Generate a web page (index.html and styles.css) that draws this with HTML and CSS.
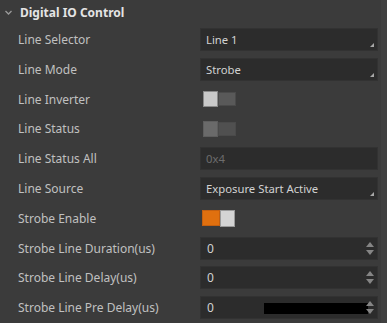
FILE: index.html
```html
<!DOCTYPE html>
<html>
<head>
<meta charset="utf-8">
<link rel="stylesheet" href="styles.css">
</head>
<body>
<div class="panel">
  <div class="header">
    <svg class="chev" width="7" height="5" viewBox="0 0 7 5"><path d="M0.5 1 L3.5 4 L6.5 1" fill="none" stroke="#9a9a9a" stroke-width="1.3"/></svg>
    <span>Digital IO Control</span>
  </div>
  <div class="row"><div class="label">Line Selector</div><div class="value"><div class="box select">Line 1<i class="corner"></i></div></div></div>
  <div class="row"><div class="label">Line Mode</div><div class="value"><div class="box select">Strobe<i class="corner"></i></div></div></div>
  <div class="row"><div class="label">Line Inverter</div><div class="value"><div class="switch off"><span class="knob"></span><span class="track"></span></div></div></div>
  <div class="row"><div class="label">Line Status</div><div class="value"><div class="switch disabled"><span class="knob"></span><span class="track"></span></div></div></div>
  <div class="row"><div class="label">Line Status All</div><div class="value"><div class="box dis">0x4</div></div></div>
  <div class="row"><div class="label">Line Source</div><div class="value"><div class="box select">Exposure Start Active<i class="corner"></i></div></div></div>
  <div class="row"><div class="label">Strobe Enable</div><div class="value"><div class="switch on"><span class="track"></span><span class="knob"></span></div></div></div>
  <div class="row"><div class="label">Strobe Line Duration(us)</div><div class="value"><div class="box num">0<i class="spin"><b class="up"></b><b class="dn"></b></i></div></div></div>
  <div class="row"><div class="label">Strobe Line Delay(us)</div><div class="value"><div class="box num">0<i class="spin"><b class="up"></b><b class="dn"></b></i></div></div></div>
  <div class="row"><div class="label">Strobe Line Pre Delay(us)</div><div class="value"><div class="box num">0<i class="redact"></i><i class="spin"><b class="up"></b><b class="dn"></b></i></div></div></div>
</div>
<div class="edge"></div>
</body>
</html>
```
FILE: styles.css
```css
html, body {
  margin: 0;
  padding: 0;
  background: #3b3b3b;
  height: 323px;
  overflow: hidden;
}
body {
  display: flex;
  font-family: "Noto Sans", "Open Sans", sans-serif;
}
.panel {
  width: 381px;
}
.edge {
  width: 6px;
  background: #404040;
}
.header {
  height: 24.6px;
  display: flex;
  align-items: center;
  padding-left: 5px;
  color: #e4e4e4;
  font-weight: bold;
  font-size: 12px;
}
.chev {
  margin-right: 8px;
  margin-top: 1px;
}
.row {
  height: 29.8px;
  display: grid;
  grid-template-columns: 200px 179px;
  align-items: center;
}
.label {
  padding-left: 18px;
  color: #c0c0c0;
  font-size: 12px;
  white-space: nowrap;
}
.value {
  display: flex;
  align-items: center;
}
.box {
  position: relative;
  box-sizing: border-box;
  width: 178px;
  height: 23px;
  background: #2c2c2c;
  border: 1px solid #323232;
  color: #d2d2d2;
  font-size: 11.3px;
  padding-left: 5px;
  display: flex;
  align-items: center;
}
.box.dis {
  color: #6c6c6c;
}
.box.num {
  padding-left: 6px;
  font-size: 12px;
}
.corner {
  position: absolute;
  right: 3px;
  bottom: 3px;
  width: 0;
  height: 0;
  border-left: 4px solid transparent;
  border-bottom: 4px solid #a8a8a8;
}
.spin {
  position: absolute;
  right: 3px;
  top: 2px;
  bottom: 2px;
  width: 8px;
  display: flex;
  flex-direction: column;
  justify-content: space-between;
  align-items: center;
}
.spin b {
  width: 0;
  height: 0;
  border-left: 4px solid transparent;
  border-right: 4px solid transparent;
}
.spin .up {
  margin-top: 2px;
  border-bottom: 5px solid #858585;
}
.spin .dn {
  margin-bottom: 2px;
  border-top: 5px solid #858585;
}
.redact {
  position: absolute;
  left: 63px;
  top: 6px;
  width: 104px;
  height: 11px;
  background: #000;
}
.switch {
  display: flex;
  align-items: center;
  margin-left: 3px;
}
.knob {
  width: 15px;
  height: 16px;
  box-sizing: border-box;
}
.track {
  width: 18px;
  height: 14px;
  box-sizing: border-box;
}
.switch.off .knob {
  background: #c9c9c9;
  border: 1px solid #8a8a8a;
}
.switch.off .track {
  background: #595959;
  border: 1px solid #4a4a4a;
}
.switch.disabled .knob {
  background: #6a6a6a;
  border: 1px solid #5e5e5e;
}
.switch.disabled .track {
  background: #505050;
  border: 1px solid #4a4a4a;
}
.switch.on {
  margin-left: 2px;
}
.switch.on .track {
  width: 18px;
  height: 16px;
  background: #e0700f;
  border: 1px solid #c46010;
}
.switch.on .knob {
  height: 17px;
  background: #d4d4d4;
  border: 1px solid #9a9a9a;
}
```
